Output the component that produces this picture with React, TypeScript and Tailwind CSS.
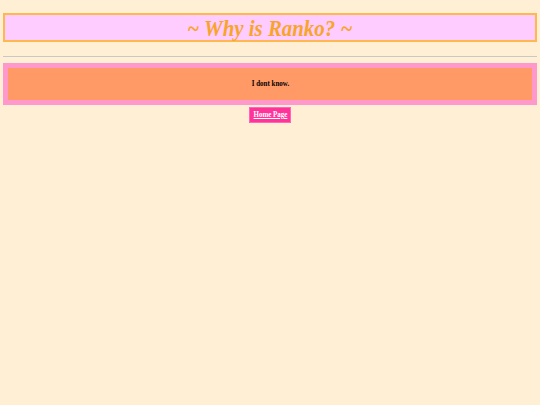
import React from 'react';

export default function App() {
  return (
    <div
      className="min-h-[405px] w-full bg-[#ffefd5] px-[3px] pt-[13px]"
      style={{ fontFamily: '"Liberation Serif", "Times New Roman", serif' }}
    >
      {/* Header */}
      <div className="flex h-[29px] items-center justify-center border-2 border-[#ffb84d] bg-[#ffccff]">
        <h1 className="inline-block scale-x-[0.87] text-[24px] font-bold italic leading-none text-[#f7a52a]">
          ~ Why is Ranko? ~
        </h1>
      </div>

      <hr className="mt-[14px] border-t border-[#c8c8c8]" />

      {/* Answer box */}
      <div className="mt-[6px] border-[5px] border-[#ff99cc] bg-[#ff9966]">
        <div className="flex h-[32px] items-center justify-center">
          <p className="inline-block scale-x-[0.87] text-[8px] font-bold text-black">I dont know.</p>
        </div>
      </div>

      <div className="mt-[2px] flex justify-center">
        <a
          href="#"
          className="flex h-[16px] w-[42px] items-center justify-center border border-[#ff66b8] bg-[#ff3399] text-[8px] font-bold text-white underline"
        >
          <span className="inline-block scale-x-[0.87]">Home Page</span>
        </a>
      </div>
    </div>
  );
}
